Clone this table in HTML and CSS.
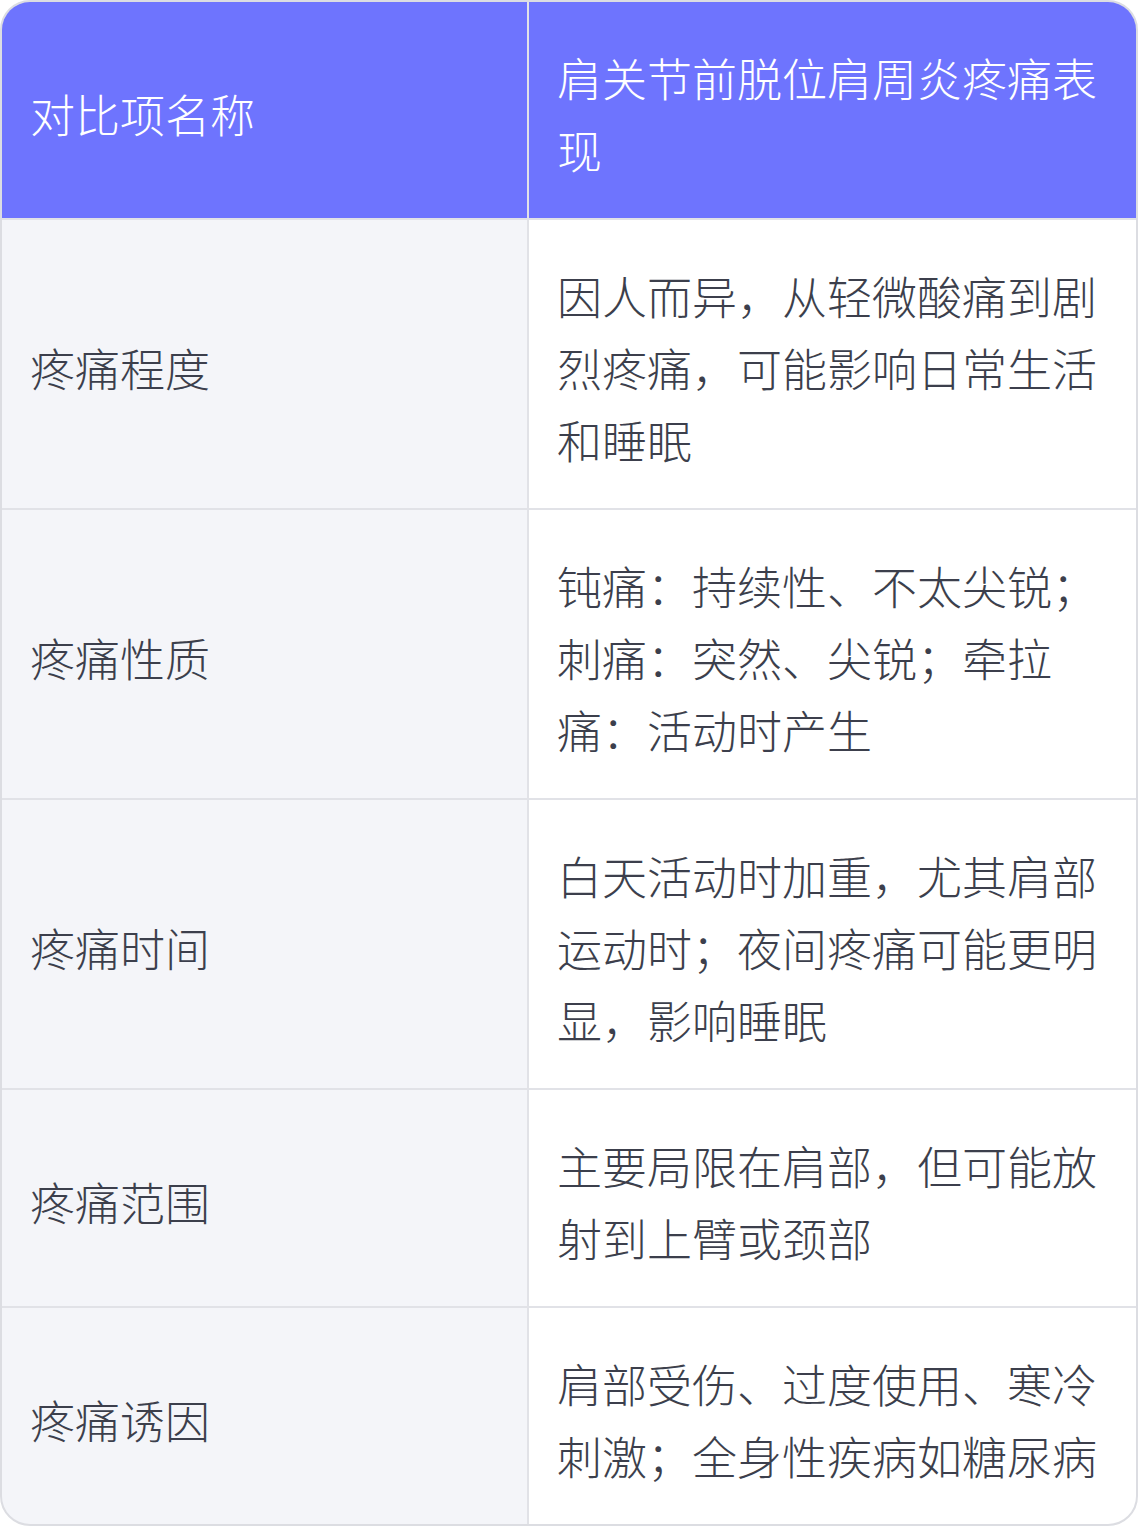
FILE: index.html
```html
<!DOCTYPE html>
<html lang="zh-CN">
<head>
<meta charset="utf-8">
<title>对比</title>
<link rel="stylesheet" href="styles.css">
</head>
<body>
<div class="table">
  <div class="cell head">对比项名称</div>
  <div class="cell head">肩关节前脱位肩周炎疼痛表现</div>

  <div class="cell key">疼痛程度</div>
  <div class="cell val">因人而异，从轻微酸痛到剧烈疼痛，可能影响日常生活和睡眠</div>

  <div class="cell key">疼痛性质</div>
  <div class="cell val">钝痛：持续性、不太尖锐；刺痛：突然、尖锐；牵拉痛：活动时产生</div>

  <div class="cell key">疼痛时间</div>
  <div class="cell val">白天活动时加重，尤其肩部运动时；夜间疼痛可能更明显，影响睡眠</div>

  <div class="cell key">疼痛范围</div>
  <div class="cell val">主要局限在肩部，但可能放射到上臂或颈部</div>

  <div class="cell key">疼痛诱因</div>
  <div class="cell val">肩部受伤、过度使用、寒冷刺激；全身性疾病如糖尿病</div>
</div>
</body>
</html>
```

FILE: styles.css
```css
html, body {
  margin: 0;
  padding: 0;
  background: #ffffff;
}

.table {
  box-sizing: border-box;
  width: 1138px;
  border: 2px solid #dcdde2;
  border-radius: 30px;
  overflow: hidden;
  display: grid;
  grid-template-columns: 525px 1fr;
  gap: 2px;
  background: #e1e2e7;
  font-family: "Noto Sans CJK SC", "Noto Sans", sans-serif;
  font-weight: 300;
  font-size: 45px;
  line-height: 72px;
  color: #3c3f4c;
}

.cell {
  padding: 40px 28px 32px;
  display: flex;
  align-items: center;
}

.head {
  background: #6e74fe;
  color: #ffffff;
}

.key {
  background: #f4f5f9;
}

.val {
  background: #ffffff;
}
```
